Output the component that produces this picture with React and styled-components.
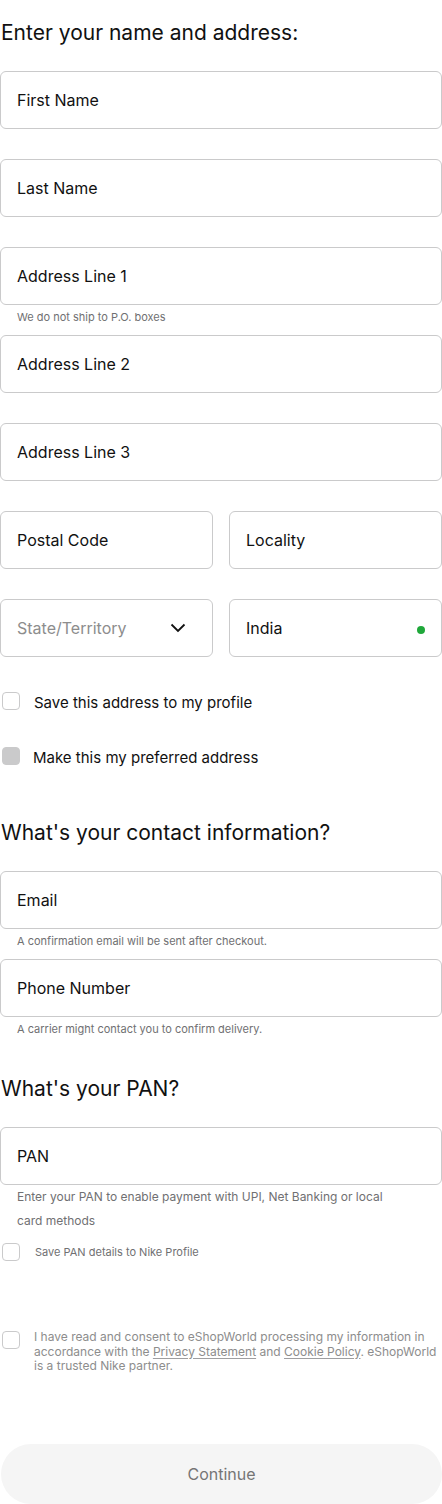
import React from "react";
import styled, { createGlobalStyle } from "styled-components";

const Global = createGlobalStyle`
  html, body { margin: 0; padding: 0; background: #fff; }
  body { font-family: Inter, "Noto Sans", Arial, sans-serif; color: #111; -webkit-font-smoothing: antialiased; }
  * { box-sizing: border-box; }
`;

const Page = styled.div`
  width: 442px;
  padding-top: 19px;
  display: flex;
  flex-direction: column;
`;

const Heading = styled.h2`
  margin: ${(p) => p.$top || 0}px 0 24px 0;
  font-size: 21px;
  line-height: 28px;
  font-weight: 400;
  color: #111;
  padding-left: 1px;
`;

const Field = styled.div`
  display: flex;
  flex-direction: column;
  margin-bottom: ${(p) => (p.$last ? 0 : p.$helper ? 6 : 30)}px;
  flex: 1;
`;

const InputBox = styled.div`
  height: 58px;
  border: 1px solid #cacacb;
  border-radius: 6px;
  display: flex;
  align-items: center;
  justify-content: space-between;
  padding: 0 16px 0 16px;
  font-size: 16px;
  color: ${(p) => (p.$placeholder ? "#8d8d8d" : "#111")};
`;

const Helper = styled.div`
  font-size: ${(p) => p.$size || 11}px;
  line-height: 24px;
  color: #707072;
  padding-left: 17px;
  padding-right: 40px;
`;

const Row = styled.div`
  display: flex;
  gap: 16px;
  margin-bottom: ${(p) => p.$mb ?? 30}px;
`;

const CheckRow = styled.label`
  display: flex;
  align-items: ${(p) => (p.$top ? "flex-start" : "center")};
  min-height: 24px;
  margin-top: ${(p) => p.$mt || 0}px;
  gap: ${(p) => p.$gap ?? 14}px;
  padding-left: 2px;
`;

const Box = styled.span`
  flex: none;
  width: 18px;
  height: 18px;
  border-radius: 4px;
  border: 1px solid #cacacb;
  background: ${(p) => (p.$filled ? "#cacacb" : "#fff")};
  margin-top: ${(p) => p.$mt || 0}px;
`;

const CheckText = styled.span`
  font-size: ${(p) => p.$size || 15}px;
  line-height: ${(p) => p.$lh || 24}px;
  color: ${(p) => p.$color || "#111"};
`;

const Link = styled.span`
  text-decoration: underline;
  text-underline-offset: 2px;
  text-decoration-color: #9e9ea0;
`;

const Dot = styled.span`
  width: 8px;
  height: 8px;
  border-radius: 50%;
  background: #1fa83a;
  margin-top: 3px;
`;

const Button = styled.button`
  margin-top: 70px;
  height: 60px;
  width: 441px;
  margin-left: 1px;
  border: none;
  border-radius: 30px;
  background: #f5f5f5;
  color: #757575;
  font-family: Inter, "Noto Sans", Arial, sans-serif;
  font-size: 16px;
`;

const Chevron = () => (
  <svg width="16" height="10" viewBox="0 0 16 10" style={{ marginRight: 10 }}>
    <path d="M1.5 1.5 L8 8 L14.5 1.5" fill="none" stroke="#111" strokeWidth="1.8" />
  </svg>
);

const Input = ({ label, helper, helperSize, placeholder, last, children }) => (
  <Field $helper={!!helper} $last={last}>
    <InputBox $placeholder={placeholder}>
      <span>{label}</span>
      {children}
    </InputBox>
    {helper && <Helper $size={helperSize}>{helper}</Helper>}
  </Field>
);

export default function App() {
  return (
    <>
      <Global />
      <Page>
        <Heading>Enter your name and address:</Heading>
        <Input label="First Name" />
        <Input label="Last Name" />
        <Input label="Address Line 1" helper="We do not ship to P.O. boxes" />
        <Input label="Address Line 2" />
        <Input label="Address Line 3" />
        <Row>
          <Input label="Postal Code" last />
          <Input label="Locality" last />
        </Row>
        <Row $mb={0}>
          <Input label="State/Territory" placeholder last>
            <Chevron />
          </Input>
          <Input label="India" last>
            <Dot />
          </Input>
        </Row>
        <CheckRow $mt={34}>
          <Box $mt={-4} />
          <CheckText>Save this address to my profile</CheckText>
        </CheckRow>
        <CheckRow $mt={31} $gap={13}>
          <Box $filled $mt={-4} />
          <CheckText>Make this my preferred address</CheckText>
        </CheckRow>

        <Heading $top={49}>What's your contact information?</Heading>
        <Input label="Email" helper="A confirmation email will be sent after checkout." />
        <Input label="Phone Number" helper="A carrier might contact you to confirm delivery." last />

        <Heading $top={34}>What's your PAN?</Heading>
        <Input
          label="PAN"
          helper="Enter your PAN to enable payment with UPI, Net Banking or local card methods"
          helperSize={12}
          last
        />
        <CheckRow $mt={7} $gap={15}>
          <Box />
          <CheckText $size={11} $color="#707072">Save PAN details to Nike Profile</CheckText>
        </CheckRow>

        <CheckRow $mt={66} $top $gap={14}>
          <Box $mt={1} />
          <CheckText $size={12} $lh={14.5} $color="#8d8d8d">
            I have read and consent to eShopWorld processing my information in accordance with the{" "}
            <Link>Privacy Statement</Link> and <Link>Cookie Policy</Link>. eShopWorld is a trusted Nike partner.
          </CheckText>
        </CheckRow>

        <Button>Continue</Button>
      </Page>
    </>
  );
}
